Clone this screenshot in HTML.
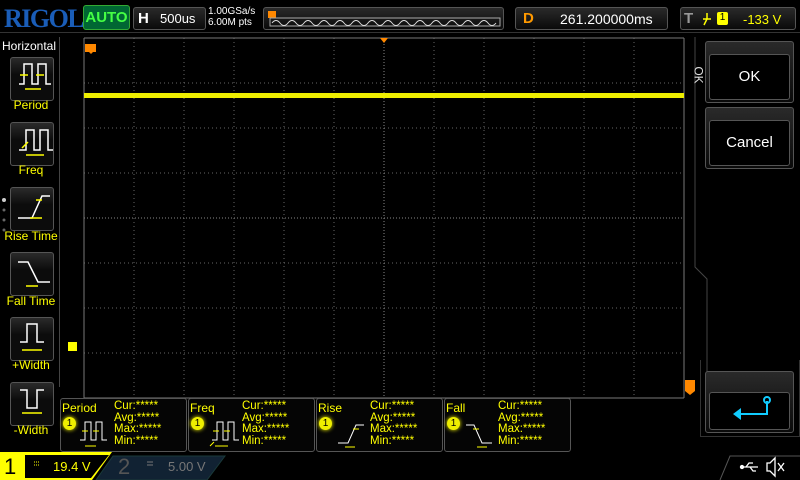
<!DOCTYPE html>
<html><head><style>
body{margin:0;width:800px;height:480px;background:#000;overflow:hidden;font-family:"Liberation Sans",sans-serif;position:relative}
.a{position:absolute}
.box{position:absolute;border:1px solid #555;border-radius:3px;background:linear-gradient(#2a2a2a,#0a0a0a)}
.btn{position:absolute;left:10px;width:42px;height:42px;border:1px solid #555;border-radius:3px;background:linear-gradient(#2a2a2a,#0c0c0c 40%)}
.lbl{position:absolute;left:0;width:62px;text-align:center;color:#ff0;font-size:12px}
.meas{position:absolute;top:398px;width:125px;height:52px;border:1px solid #555;border-radius:3px;background:#050505;font-size:11.5px;color:#ff0}
.meas .t{position:absolute;left:1px;top:2px;font-size:12px}
.meas .v{position:absolute;left:53px;top:2px;line-height:11.5px}
.meas .c{position:absolute;left:2px;top:18px;width:13px;height:13px;border-radius:50%;background:#ee0;color:#000;font-size:10px;text-align:center;line-height:13px;box-shadow:0 0 4px #ff0}
</style></head><body>
<div class="a" style="left:4px;top:4px;font-family:'Liberation Serif',serif;font-weight:bold;font-size:26px;color:#1a5db8;letter-spacing:-1.5px">RIGOL</div>
<div class="a" style="left:83px;top:5px;width:45px;height:23px;border:1px solid #3a3;border-radius:3px;background:#063;color:#4f4;font-weight:bold;font-size:15px;line-height:23px;text-align:center">AUTO</div>
<div class="box" style="left:133px;top:7px;width:71px;height:21px"><span class="a" style="left:4px;top:2px;color:#fff;font-weight:bold;font-size:15px">H</span><span class="a" style="left:26px;top:3px;color:#fff;font-size:13px">500us</span></div>
<div class="a" style="left:208px;top:6px;color:#fff;font-size:10px;line-height:11px">1.00GSa/s<br>6.00M pts</div>
<div class="box" style="left:263px;top:7px;width:239px;height:21px"><svg class="a" style="left:3px;top:1px" width="234" height="18"><path d="M1 2h8v7h-8z" fill="#f80"/><rect x="3" y="9" width="230" height="8" fill="none" stroke="#aaa"/><path d="M5 14 q4 -5 8 0 t8 0 t8 0 t8 0 t8 0 t8 0 t8 0 t8 0 t8 0 t8 0 t8 0 t8 0 t8 0 t8 0 t8 0 t8 0 t8 0 t8 0 t8 0 t8 0 t8 0 t8 0 t8 0 t8 0 t8 0 t8 0 t8 0 t8 0" fill="none" stroke="#ddd"/></svg></div>
<div class="box" style="left:515px;top:7px;width:151px;height:21px"><span class="a" style="left:7px;top:2px;color:#f90;font-weight:bold;font-size:15px">D</span><span class="a" style="left:44px;top:3px;color:#fff;font-size:14px">261.200000ms</span></div>
<div class="box" style="left:680px;top:7px;width:114px;height:21px"><span class="a" style="left:3px;top:2px;color:#999;font-weight:bold;font-size:15px">T</span><svg class="a" style="left:20px;top:3px" width="12" height="15"><path d="M2 8h8M6 2v6l-3 6" stroke="#ff0" stroke-width="1.5" fill="none"/></svg><span class="a" style="left:36px;top:4px;width:11px;height:13px;background:#ff0;color:#000;font-size:10px;text-align:center;border-radius:2px">1</span><span class="a" style="left:62px;top:4px;color:#ff0;font-size:13px">-133 V</span></div>
<div class="a" style="left:0;top:32px;width:800px;height:1px;background:#333"></div>
<div class="a" style="left:0;top:37px;width:59px;height:350px;border-right:1px solid #444"></div>
<div class="a" style="left:2px;top:39px;color:#fff;font-size:12px">Horizontal</div>
<div class="btn" style="top:57px"></div><div class="lbl" style="top:98px">Period</div>
<div class="btn" style="top:122px"></div><div class="lbl" style="top:163px">Freq</div>
<div class="btn" style="top:187px"></div><div class="lbl" style="top:229px">Rise Time</div>
<div class="btn" style="top:252px"></div><div class="lbl" style="top:294px">Fall Time</div>
<div class="btn" style="top:317px"></div><div class="lbl" style="top:358px">+Width</div>
<div class="btn" style="top:382px"></div><div class="lbl" style="top:423px">-Width</div>
<svg class="a" style="left:0;top:0" width="60" height="430" fill="none" stroke="#fff" stroke-width="1.5">
<path d="M19 84h5v-20h8v20h6v-20h8v20h5"/><path d="M20 75h8M36 75h8M25 89h16" stroke="#ff0"/>
<path d="M19 150h7v-20h8v20h6v-20h8v20h5"/><path d="M22 148l6-6M26 155h18" stroke="#ff0"/>
<path d="M18 218h14l10-22h8"/><path d="M36 200h6M30 218h12" stroke="#ff0"/>
<path d="M18 262h10l10 20h12"/><path d="M26 286h12" stroke="#ff0"/>
<path d="M20 342h7v-18h10v18h7"/><path d="M22 350h20" stroke="#ff0"/>
<path d="M20 390h7v18h10v-18h7"/><path d="M22 413h20" stroke="#ff0"/>
<circle cx="4" cy="200" r="2" fill="#ccc" stroke="none"/><circle cx="4" cy="210" r="1.5" fill="#666" stroke="none"/><circle cx="4" cy="220" r="1.5" fill="#666" stroke="none"/><circle cx="4" cy="230" r="1.5" fill="#666" stroke="none"/>
</svg>
<svg class="a" style="left:0;top:0" width="800" height="480">
<g stroke="#666" stroke-dasharray="1 3">
<path d="M134 38v360M184 38v360M234 38v360M284 38v360M334 38v360M434 38v360M484 38v360M534 38v360M584 38v360M634 38v360"/>
<path d="M84 83h600M84 128h600M84 173h600M84 263h600M84 308h600M84 353h600"/>
</g>
<g stroke="#888"><path d="M384 38v360M84 218h600" stroke-dasharray="1 2"/><path d="M84 38v360M684 38v360M84 398h600M84 38h600" stroke="#777"/></g>
<rect x="84" y="93" width="600" height="5" fill="#ee0"/>
<path d="M85 44h11v8h-3l-2 2-2-2h-4z" fill="#f80"/>
<path d="M380 38h8l-4 5z" fill="#f80"/>
<path d="M685 380h10v11l-5 4-5-4z" fill="#f80"/>
<path d="M68 342h9v9h-9z" fill="#ff0"/>
<path d="M695 37v230l12 12v118" stroke="#444" fill="none"/>
</svg>
<div class="a" style="left:690px;top:68px;color:#ddd;font-size:12px;transform:rotate(90deg)">OK</div>
<div class="box" style="left:705px;top:41px;width:87px;height:60px"><div class="a" style="left:3px;top:12px;width:79px;height:44px;border:1px solid #555;border-radius:3px;background:#000;color:#fff;font-size:15px;text-align:center;line-height:44px">OK</div></div>
<div class="box" style="left:705px;top:107px;width:87px;height:60px"><div class="a" style="left:3px;top:12px;width:79px;height:44px;border:1px solid #555;border-radius:3px;background:#000;color:#fff;font-size:15px;text-align:center;line-height:44px">Cancel</div></div>
<div class="box" style="left:705px;top:371px;width:87px;height:60px"><div class="a" style="left:3px;top:20px;width:79px;height:36px;border:1px solid #555;border-radius:3px;background:#000"><svg width="79" height="36"><path d="M57 8v13h-30" stroke="#1cf" stroke-width="2" fill="none"/><circle cx="57" cy="7" r="3" fill="none" stroke="#1cf" stroke-width="2"/><path d="M23 21l8-6v12z" fill="#1cf"/></svg></div></div>
<div class="a" style="left:700px;top:360px;width:98px;height:76px;border:1px solid #333;border-top:none"></div>
<div class="meas" style="left:60px"><span class="t">Period</span><span class="c">1</span><span class="v">Cur:*****<br>Avg:*****<br>Max:*****<br>Min:*****</span><svg class="a" style="left:18px;top:20px" width="34" height="32" fill="none" stroke="#fff"><path d="M1 21h5v-18h6v18h5v-18h6v18h5"/><path d="M3 12h6M14 12h6M6 27h11" stroke="#ff0"/></svg></div>
<div class="meas" style="left:188px"><span class="t">Freq</span><span class="c">1</span><span class="v">Cur:*****<br>Avg:*****<br>Max:*****<br>Min:*****</span><svg class="a" style="left:18px;top:20px" width="34" height="32" fill="none" stroke="#fff"><path d="M5 21h5v-18h6v18h5v-18h6v18h5"/><path d="M6 12h6M17 12h6M3 27l4-4M8 27h13" stroke="#ff0"/></svg></div>
<div class="meas" style="left:316px"><span class="t">Rise</span><span class="c">1</span><span class="v">Cur:*****<br>Avg:*****<br>Max:*****<br>Min:*****</span><svg class="a" style="left:18px;top:20px" width="34" height="32" fill="none" stroke="#fff"><path d="M3 24h10l8-18h8"/><path d="M18 10h6M10 28h10" stroke="#ff0"/></svg></div>
<div class="meas" style="left:444px"><span class="t">Fall</span><span class="c">1</span><span class="v">Cur:*****<br>Avg:*****<br>Max:*****<br>Min:*****</span><svg class="a" style="left:18px;top:20px" width="34" height="32" fill="none" stroke="#fff"><path d="M3 6h8l8 18h10"/><path d="M10 10h6M14 28h10" stroke="#ff0"/></svg></div>
<svg class="a" style="left:0;top:452px" width="800" height="28">
<path d="M0 0h112l-20 28H0z" fill="#ff0"/><path d="M25 3h84l-18 23H25z" fill="#000"/>
<path d="M113 4h112l-18 24H96z" fill="#123" stroke="#1a3a3a"/>
<path d="M720 28l10-24h70" stroke="#555" fill="none"/>
<path d="M34 10h6M34 13h6" stroke="#ff0" stroke-dasharray="1 1"/><path d="M147 10h6M147 13h6" stroke="#777"/>
<g stroke="#fff" fill="none" stroke-width="1.3"><path d="M742 15h16M746 15l3-4h4M750 15l3 4h3"/><circle cx="742" cy="15" r="1.5" fill="#fff"/><path d="M767 11h3l5-5v18l-5-5h-3zM778 11l6 8M784 11l-6 8"/></g>
</svg>
<div class="a" style="left:4px;top:454px;font-size:22px;color:#000">1</div>
<div class="a" style="left:53px;top:459px;font-size:13px;color:#ff0">19.4 V</div>
<div class="a" style="left:118px;top:454px;font-size:22px;color:#555">2</div>
<div class="a" style="left:168px;top:459px;font-size:13px;color:#777">5.00 V</div>
</body></html>
